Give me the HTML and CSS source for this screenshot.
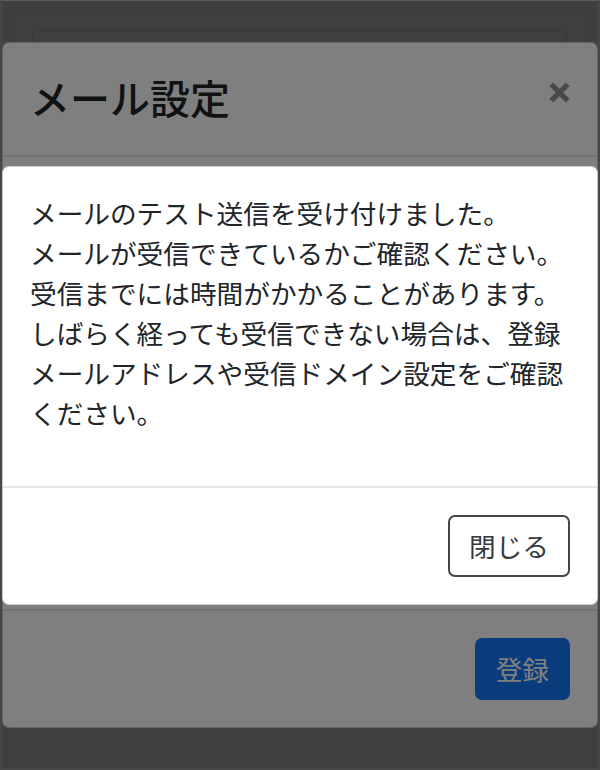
FILE: index.html
```html
<!DOCTYPE html>
<html lang="ja">
<head>
<meta charset="utf-8">
<title>メール設定</title>
<link rel="stylesheet" href="styles.css">
</head>
<body>
<div class="screen">
  <div class="page">
    <div class="container">
      <div class="card"></div>
    </div>
  </div>

  <div class="backdrop"></div>

  <div class="modal modal-settings">
    <div class="modal-header">
      <h4 class="modal-title">メール設定</h4>
      <button class="close" type="button" aria-label="閉じる">
        <svg width="23" height="23" viewBox="0 0 23 23" aria-hidden="true">
          <path d="M3.3 3.3 L19.7 19.7 M19.7 3.3 L3.3 19.7" stroke="currentColor" stroke-width="5.2" stroke-linecap="butt" fill="none"/>
        </svg>
      </button>
    </div>
    <div class="modal-body-fill"></div>
    <div class="modal-footer">
      <button class="btn btn-primary" type="button">登録</button>
    </div>
  </div>

  <div class="backdrop"></div>

  <div class="modal modal-notice">
    <div class="modal-body">
      <p class="message">メールのテスト送信を受け付けました。<br>メールが受信できているかご確認ください。<br>受信までには時間がかかることがあります。<br>しばらく経っても受信できない場合は、登録メールアドレスや受信ドメイン設定をご確認ください。</p>
    </div>
    <div class="modal-footer">
      <button class="btn btn-outline" type="button">閉じる</button>
    </div>
  </div>
</div>
</body>
</html>
```

FILE: styles.css
```css
html, body {
  margin: 0;
  padding: 0;
  background: #404040;
}

body {
  font-family: "Noto Sans CJK JP", "Noto Sans", sans-serif;
  color: #212529;
}

.screen {
  position: relative;
  width: 600px;
  height: 770px;
  box-sizing: border-box;
  border: 2px solid #474747;
  border-top: 1px solid #5c5c5c;
  background: #ffffff;
  overflow: hidden;
}

.page {
  padding: 10px 11px 0;
}

.container {
  border: 1px solid #e4e6e9;
  padding: 18px 18px 0;
  height: 700px;
  box-sizing: border-box;
}

.card {
  border: 1px solid #dee2e6;
  border-radius: 7px;
  height: 640px;
}

.backdrop {
  position: absolute;
  inset: 0;
  background: rgba(0, 0, 0, 0.5);
}

.modal {
  position: absolute;
  left: 0;
  right: 0;
  background: #ffffff;
  border: 1px solid rgba(0, 0, 0, 0.2);
  border-radius: 7px;
  display: flex;
  flex-direction: column;
}

.modal-settings {
  top: 41px;
  height: 686px;
  box-sizing: border-box;
}

.modal-notice {
  top: 165px;
}

.modal-header {
  display: flex;
  align-items: flex-start;
  padding: 24px 27px 28px;
  border-bottom: 2px solid #dee2e6;
}

.modal-title {
  margin: 0;
  font-size: 40px;
  line-height: 60px;
  font-weight: 500;
  color: #212529;
  letter-spacing: 0;
}

.close {
  margin: 14px -1px 0 auto;
  padding: 0;
  border: 0;
  background: transparent;
  color: #939393;
  width: 23px;
  height: 23px;
  display: flex;
}

.modal-body-fill {
  flex: 1;
}

.modal-body {
  padding: 26px 27px 26px;
}

.message {
  margin: 0 0 27px;
  font-size: 26.67px;
  line-height: 40px;
}

.modal-footer {
  display: flex;
  justify-content: flex-end;
  padding: 27px 27px 27px;
  border-top: 2px solid #e3e5e8;
}

.btn {
  font-family: "Noto Sans CJK JP", "Noto Sans", sans-serif;
  font-size: 26.67px;
  line-height: 40px;
  padding: 9px 19px;
  border-radius: 7px;
  border: 2px solid transparent;
  background: transparent;
  margin: 0;
}

.btn-primary {
  background: #1479f8;
  border-color: #1479f8;
  color: #ffffff;
}

.btn-outline {
  border-color: #41464c;
  color: #343a40;
  background: #ffffff;
}
```
